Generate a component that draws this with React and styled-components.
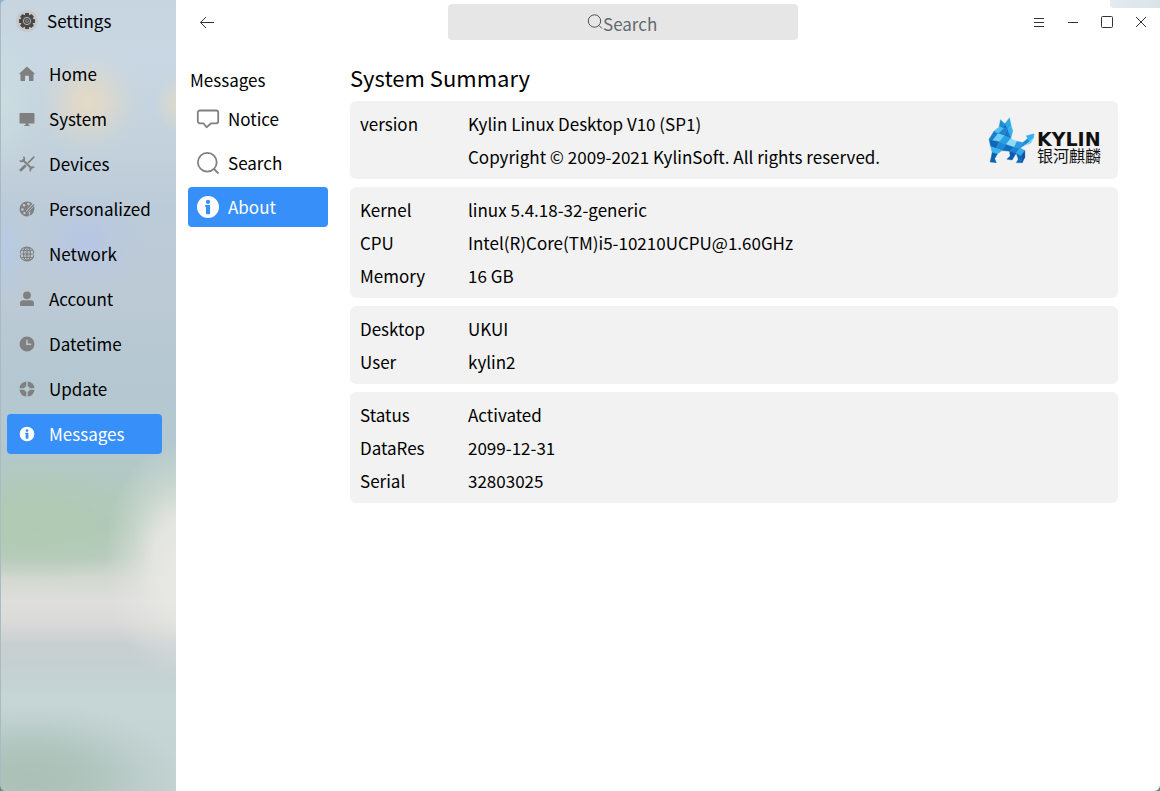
import React from 'react';
import styled, { createGlobalStyle, css } from 'styled-components';

const Global = createGlobalStyle`
  * { box-sizing: border-box; }
  body {
    margin: 0;
    background: linear-gradient(#8fb0d0, #5f8c88);
    color: #000;
    font-family: "Noto Sans CJK SC", "Noto Sans", sans-serif;
    font-size: 17px;
    line-height: 24px;
  }
  button, input { font: inherit; color: inherit; }
`;

const Window = styled.div`
  display: flex;
  min-height: 100vh;
  overflow: hidden;
  border-radius: 6px;
`;

const Sidebar = styled.aside`
  flex: 0 0 176px;
  border-left: 1px solid #a9bac2;
  background:
    radial-gradient(circle at 88px 102px, rgba(230, 218, 196, 0.95) 0, rgba(230, 218, 196, 0.75) 14px, rgba(230, 218, 196, 0.32) 32px, rgba(230, 218, 196, 0.08) 46px, rgba(230, 218, 196, 0) 58px),
    radial-gradient(circle at 184px 104px, #e6dac4 0, rgba(230, 218, 196, 0.5) 14px, rgba(230, 218, 196, 0) 32px),
    radial-gradient(circle at 86px 242px, rgba(181, 197, 232, 0.8) 0, rgba(181, 197, 232, 0.3) 28px, rgba(181, 197, 232, 0) 52px),
    radial-gradient(ellipse 28px 50px at 0 250px, rgba(180, 203, 232, 0.8) 0, rgba(180, 203, 232, 0) 100%),
    radial-gradient(ellipse 40px 80px at 0 100px, rgba(203, 222, 224, 0.9) 0, rgba(203, 222, 224, 0) 100%),
    radial-gradient(ellipse 76px 120px at 180px 560px, #e8e8e4 0, rgba(232, 232, 228, 0.9) 35%, rgba(232, 232, 228, 0.4) 65%, rgba(232, 232, 228, 0) 100%),
    radial-gradient(ellipse 110px 60px at 34px 522px, #b0cbb2 0, rgba(176, 203, 178, 0) 100%),
    radial-gradient(ellipse 150px 74px at 30px 778px, #aac1b7 0, rgba(170, 193, 183, 0.8) 40%, rgba(170, 193, 183, 0.2) 80%, rgba(170, 193, 183, 0) 100%),
    linear-gradient(
      #c7d5e0 0, #c8d7e3 60px, #c3d2dc 140px, #bccbd8 210px, #bccad6 290px,
      #b6c8d2 360px, #b3c8d0 440px, #b1c9c2 480px, #b0c8b8 530px, #b9cbbe 556px,
      #d2d8d0 578px, #dededc 602px, #dadad9 622px, #c9cfd1 645px, #c5d0d2 665px,
      #c6d5d6 700px, #c3d2d2 791px
    );
`;

const Brand = styled.div`
  display: flex;
  align-items: center;
  gap: 9px;
  height: 42px;
  padding-left: 15px;
`;

const BrandIcon = styled.span`
  display: flex;
  align-items: center;
  justify-content: center;
  width: 22px;
  height: 22px;
  border-radius: 50%;
  background: #c8c8c9;
`;

const MainNav = styled.nav`
  display: flex;
  flex-direction: column;
  gap: 5px;
  padding: 12px 14px 0 6px;
`;

const itemBase = css`
  display: flex;
  align-items: center;
  height: 40px;
  border-radius: 4px;
  text-decoration: none;
  color: ${(p) => (p.$active ? '#fff' : '#000')};
  background: ${(p) => (p.$active ? '#3790fa' : 'transparent')};
  svg { color: ${(p) => (p.$active ? '#fff' : '#808080')}; }
`;

const MainLink = styled.a`
  ${itemBase}
  gap: 14px;
  padding-left: 12px;
`;

const SubLink = styled.a`
  ${itemBase}
  gap: 8px;
  padding-left: 8px;
`;

const Main = styled.div`
  flex: 1;
  min-width: 0;
  display: flex;
  flex-direction: column;
  background: #fff;
`;

const TopBar = styled.header`
  display: flex;
  justify-content: space-between;
  align-items: center;
  height: 44px;
  padding: 0 2px 0 14px;
`;

const IconButton = styled.button`
  display: flex;
  align-items: center;
  justify-content: center;
  width: 34px;
  height: 36px;
  padding: 0;
  border: 0;
  background: none;
  color: #333;
`;

const Controls = styled.div`
  display: flex;
`;

const SearchField = styled.label`
  display: flex;
  align-items: center;
  justify-content: center;
  width: 350px;
  height: 36px;
  border-radius: 4px;
  background: #e6e6e6;
  color: #4a5252;
`;

const SearchInput = styled.input`
  width: 56px;
  height: 26px;
  padding: 2px 0 0;
  border: 0;
  outline: 0;
  background: none;
  &::placeholder { color: #5f6b6b; opacity: 1; }
`;

const DesktopPeek = styled.div`
  position: absolute;
  top: 0;
  right: 0;
  width: 50px;
  height: 8px;
  border-radius: 0 0 0 4px;
  background: linear-gradient(90deg, #e4ebf0, #d9e4e9);
`;

const Body = styled.div`
  display: flex;
  flex: 1;
`;

const SubNav = styled.nav`
  display: flex;
  flex-direction: column;
  gap: 4px;
  flex: 0 0 140px;
  margin: 24px 22px 0 12px;
`;

const SubTitle = styled.h2`
  margin: 0;
  padding: 0 0 3px 2px;
  font-size: 17px;
  font-weight: 400;
  line-height: 24px;
`;

const Content = styled.main`
  flex: 1;
  min-width: 0;
  display: flex;
  flex-direction: column;
  gap: 8px;
  padding: 18px 42px 24px 0;
`;

const Title = styled.h1`
  margin: 0;
  font-size: 22px;
  font-weight: 400;
  line-height: 31px;
`;

const Card = styled.section`
  display: flex;
  align-items: center;
  justify-content: space-between;
  padding: 6px 17px 6px 10px;
  border-radius: 6px;
  background: #f2f2f2;
`;

const Facts = styled.table`
  border-collapse: collapse;
  th, td { height: 33px; padding: 0; text-align: left; font-weight: 400; }
  th { width: 108px; }
`;

const Logo = styled.div`
  display: flex;
  align-items: center;
  gap: 2px;
`;

const LogoWords = styled.div`
  display: flex;
  flex-direction: column;
  padding-top: 14px;
`;

const LogoLatin = styled.span`
  font: bold 19px/16px "DejaVu Sans", sans-serif;
  color: #111;
`;

const LogoHan = styled.span`
  font-size: 16px;
  line-height: 16px;
  color: #111;
`;

const Svg = ({ size = 16, box = '0 0 16 16', children, ...rest }) => (
  <svg width={size} height={size} viewBox={box} fill="currentColor" aria-hidden="true" {...rest}>
    {children}
  </svg>
);

const teeth = [0, 45, 90, 135, 180, 225, 270, 315];

const GearIcon = () => (
  <Svg>
    {teeth.map((a) => (
      <rect key={a} x="6" y="0" width="4" height="4" rx="0.6" fill="#484848" transform={`rotate(${a} 8 8)`} />
    ))}
    <circle cx="8" cy="8" r="6.4" fill="#484848" />
    <circle cx="8" cy="8" r="3.6" fill="none" stroke="#b9b9b9" strokeWidth="1" />
    <circle cx="8" cy="8" r="1.5" fill="none" stroke="#a0a0a0" strokeWidth="0.8" />
  </Svg>
);

const HomeIcon = () => (
  <Svg>
    <path d="M8 .4 15.4 7.2c.5.5.2 1.1-.4 1.1h-.5v5.900c0 .5-.4.9-.9.9H10V10.500a.7.7 0 0 0-.7-.7H6.700a.7.7 0 0 0-.7.7v4.600H2.400a.9.9 0 0 1-.9-.9V8.300H1C.4 8.300.1 7.700.6 7.200Z" />
  </Svg>
);

const SystemIcon = () => (
  <Svg>
    <path d="M1.300 2h13.400c.5 0 .8.3.8.8v9c0 .5-.3.8-.8.8H9.500V14h1.200v1H5.300v-1h1.200v-1.400H1.300a.8.8 0 0 1-.8-.8v-9c0-.5.3-.8.8-.8Z" />
  </Svg>
);

const DevicesIcon = () => (
  <Svg fill="none" stroke="currentColor" strokeLinecap="round">
    <path d="M4 4 12.500 12.500" strokeWidth="1.900" />
    <path d="M4.900 1.300A2.600 2.600 0 0 1 1.300 4.900" strokeWidth="1.700" />
    <path d="M11.300 14.700a2.600 2.600 0 0 1 3.400-3.400" strokeWidth="1.600" />
    <path d="M14.800 1.200 9.400 6.600" strokeWidth="1.700" />
    <path d="M6 10 1.900 14.100" strokeWidth="2.800" />
  </Svg>
);

const PaletteIcon = () => (
  <Svg>
    <path
      fillRule="evenodd"
      d="M8 .5C12.400.5 15.500 3.500 15.500 7.500c0 2-.8 3-2.200 3.200l-2.500.4c-1.200.3-1.300 1.100-.9 2 .4 1.200 0 2.400-1.900 2.400A7.500 7.500 0 0 1 8 .5ZM5 3a1.300 1.300 0 1 0 0 2.600A1.300 1.300 0 0 0 5 3Zm4.500-1.200a1.300 1.300 0 1 0 0 2.600 1.300 1.300 0 0 0 0-2.600ZM3.400 7.200a1.300 1.300 0 1 0 0 2.600 1.300 1.300 0 0 0 0-2.600Zm2 3.700a1.200 1.200 0 1 0 0 2.400 1.200 1.200 0 0 0 0-2.400Z"
    />
    <path d="M14.800 3.300 7.800 10.800" stroke="#c0cdd8" strokeWidth="2.600" fill="none" />
    <path d="M15 3.600 9.200 9.600l-2 2.200" stroke="currentColor" strokeWidth="1.400" fill="none" />
    <path d="M11 11.600 15 9.500a7 7 0 0 1-4.500 5.300Z" />
  </Svg>
);

const NetworkIcon = () => (
  <Svg fill="none" stroke="currentColor" strokeWidth="1.200">
    <circle cx="8" cy="8" r="6.900" strokeDasharray="8.500 2.340" strokeDashoffset="-1.200" />
    <ellipse cx="8" cy="8" rx="3.500" ry="6.900" />
    <path d="M8 1v14M1 8h14M2.500 4.500h11M2.500 11.500h11" />
    <path d="M5.500 5.500h5v5h-5z" fill="currentColor" stroke="none" opacity="0.4" />
  </Svg>
);

const AccountIcon = () => (
  <Svg>
    <circle cx="8" cy="4.300" r="3.900" />
    <path d="M4.200 9.200h7.600a3.200 3.200 0 0 1 3.200 3.200v1.400c0 .9-.5 1.300-1.300 1.300H2.300c-.8 0-1.300-.4-1.300-1.300v-1.400a3.200 3.200 0 0 1 3.200-3.200Z" />
  </Svg>
);

const ClockIcon = () => (
  <Svg>
    <path fillRule="evenodd" d="M8 .5a7.500 7.500 0 1 1 0 15 7.500 7.500 0 0 1 0-15ZM7.200 3.800v5.100h5V7.400H8.700V3.800Z" />
  </Svg>
);

const UpdateIcon = () => (
  <Svg>
    <path
      fillRule="evenodd"
      d="M7.300.5v4.800A2.800 2.800 0 0 0 5.300 7.300H.5A7.600 7.600 0 0 1 7.300.5Zm1.400 0a7.600 7.600 0 0 1 6.800 6.800h-4.800a2.800 2.800 0 0 0-2-2ZM.5 8.700h4.800a2.800 2.800 0 0 0 2 2v4.800A7.600 7.600 0 0 1 .5 8.700Zm15 0a7.600 7.600 0 0 1-6.800 6.800v-4.800a2.800 2.800 0 0 0 2-2Z"
    />
  </Svg>
);

const InfoIcon = ({ size }) => (
  <Svg size={size} box="-1 -1 24 24">
    <path
      fillRule="evenodd"
      d="M11 0a11 11 0 1 1 0 22 11 11 0 0 1 0-22Zm0 3.800a2.100 2.100 0 1 0 0 4.200 2.100 2.100 0 0 0 0-4.200ZM8.200 9v2H9v6.500c0 .5.300.8.8.8h2.500c.5 0 .8-.3.8-.8V9.800c0-.5-.3-.8-.8-.8Z"
    />
  </Svg>
);

const NoticeIcon = () => (
  <Svg size={24} box="0 0 24 24" fill="none" stroke="currentColor" strokeWidth="1.800" strokeLinejoin="round">
    <path d="M3.800 3.500h16.400a2 2 0 0 1 2 2v8.800a2 2 0 0 1-2 2h-5L10.500 20.200 7.500 16.300H3.800a2 2 0 0 1-2-2V5.500a2 2 0 0 1 2-2Z" />
  </Svg>
);

const BigSearchIcon = () => (
  <Svg size={24} box="0 0 24 24" fill="none" stroke="currentColor" strokeWidth="1.800">
    <circle cx="11.300" cy="11.300" r="9.400" />
    <path d="m18 18 4.500 4.500" />
  </Svg>
);

const SmallSearchIcon = () => (
  <Svg fill="none" stroke="currentColor" strokeWidth="1">
    <circle cx="7.500" cy="7" r="6.200" />
    <path d="m12 11.500 3 3" />
  </Svg>
);

const facets = [
  ['61,42 74,54 70,68 57,64', '#1b8fd6'],
  ['88,36 93,60 82,70 74,54', '#2aa8e8'],
  ['74,54 82,70 70,68', '#0f6fbe'],
  ['57,64 70,68 54,84 42,76', '#4fc0f0'],
  ['70,68 82,70 72,90 54,84', '#1a86d2'],
  ['82,70 93,60 98,76 92,98', '#38b0ec'],
  ['82,70 92,98 72,90', '#1476c4'],
  ['42,76 54,84 38,104 27,100', '#1880cc'],
  ['54,84 72,90 58,108 38,104', '#6ccdf5'],
  ['72,90 92,98 78,116 58,108', '#2a9fe2'],
  ['27,100 38,104 58,108 48,128 32,122', '#0d67b8'],
  ['58,108 78,116 66,134 48,128', '#1c8ad4'],
  ['32,122 48,128 66,134 52,144 36,140', '#3db4ee'],
  ['36,140 52,144 44,158 49,170 30,168 34,152', '#0c62b0'],
  ['92,98 110,106 102,124 78,116', '#8fdcf8'],
  ['110,106 128,110 120,126 102,124', '#2b9de2'],
  ['78,116 102,124 88,136 66,134', '#0f6cbe'],
  ['102,124 120,126 108,142 88,136', '#1a84d0'],
  ['88,136 108,142 96,162 80,160 90,150', '#0b5cae'],
  ['108,142 120,126 134,134 122,150', '#35aceb'],
  ['108,142 122,150 126,170 108,170 114,160', '#0f6cbe'],
  ['122,150 134,134 134,154 126,170', '#0a55a4'],
  ['128,110 142,98 148,108 120,126', '#1c8cd6'],
  ['142,98 138,90 161,84 160,96 148,108', '#36aeea'],
  ['148,108 160,96 152,112 136,118', '#7ed4f6'],
];

const KylinMark = () => (
  <svg width="47" height="47" viewBox="24 34 140 140" aria-hidden="true">
    {facets.map(([points, fill]) => (
      <polygon key={points} points={points} fill={fill} stroke={fill} strokeWidth="1" />
    ))}
  </svg>
);

const mainItems = [
  ['Home', HomeIcon],
  ['System', SystemIcon],
  ['Devices', DevicesIcon],
  ['Personalized', PaletteIcon],
  ['Network', NetworkIcon],
  ['Account', AccountIcon],
  ['Datetime', ClockIcon],
  ['Update', UpdateIcon],
  ['Messages', InfoIcon],
];

const groups = [
  [
    ['version', 'Kylin Linux Desktop V10 (SP1)'],
    ['', 'Copyright © 2009-2021 KylinSoft. All rights reserved.'],
  ],
  [
    ['Kernel', 'linux 5.4.18-32-generic'],
    ['CPU', 'Intel(R)Core(TM)i5-10210UCPU@1.60GHz'],
    ['Memory', '16 GB'],
  ],
  [
    ['Desktop', 'UKUI'],
    ['User', 'kylin2'],
  ],
  [
    ['Status', 'Activated'],
    ['DataRes', '2099-12-31'],
    ['Serial', '32803025'],
  ],
];

const line = { fill: 'none', stroke: 'currentColor', strokeWidth: 1 };

export default function App() {
  return (
    <Window>
      <Global />
      <Sidebar>
        <Brand>
          <BrandIcon><GearIcon /></BrandIcon>
          Settings
        </Brand>
        <MainNav aria-label="Settings">
          {mainItems.map(([name, Icon]) => (
            <MainLink key={name} href="#" $active={name === 'Messages'}>
              <Icon />
              {name}
            </MainLink>
          ))}
        </MainNav>
      </Sidebar>
      <Main>
        <TopBar>
          <IconButton aria-label="Back">
            <Svg {...line}><path d="M15 8.500H1.500M7 3 1.500 8.500 7 14" /></Svg>
          </IconButton>
          <SearchField>
            <SmallSearchIcon />
            <SearchInput aria-label="Search" placeholder="Search" />
          </SearchField>
          <Controls>
            <IconButton aria-label="Menu">
              <Svg {...line}><path d="M3 4.500h10M3 8.500h10M3 12.500h10" /></Svg>
            </IconButton>
            <IconButton aria-label="Minimize">
              <Svg {...line}><path d="M3 8.500h10" /></Svg>
            </IconButton>
            <IconButton aria-label="Maximize">
              <Svg {...line}><rect x="2.500" y="2.500" width="11" height="11" rx="1" /></Svg>
            </IconButton>
            <IconButton aria-label="Close">
              <Svg {...line}><path d="m3 3 10 10M13 3 3 13" /></Svg>
            </IconButton>
          </Controls>
        </TopBar>
        <Body>
          <SubNav aria-label="Messages">
            <SubTitle>Messages</SubTitle>
            <SubLink href="#"><NoticeIcon />Notice</SubLink>
            <SubLink href="#"><BigSearchIcon />Search</SubLink>
            <SubLink href="#" $active><InfoIcon size={24} />About</SubLink>
          </SubNav>
          <Content>
            <Title>System Summary</Title>
            {groups.map((rows, i) => (
              <Card key={rows[0][0]}>
                <Facts>
                  <tbody>
                    {rows.map(([label, value]) => (
                      <tr key={value}>
                        <th scope="row">{label}</th>
                        <td>{value}</td>
                      </tr>
                    ))}
                  </tbody>
                </Facts>
                {i === 0 && (
                  <Logo>
                    <KylinMark />
                    <LogoWords>
                      <LogoLatin>KYLIN</LogoLatin>
                      <LogoHan>银河麒麟</LogoHan>
                    </LogoWords>
                  </Logo>
                )}
              </Card>
            ))}
          </Content>
        </Body>
      </Main>
      <DesktopPeek />
    </Window>
  );
}
